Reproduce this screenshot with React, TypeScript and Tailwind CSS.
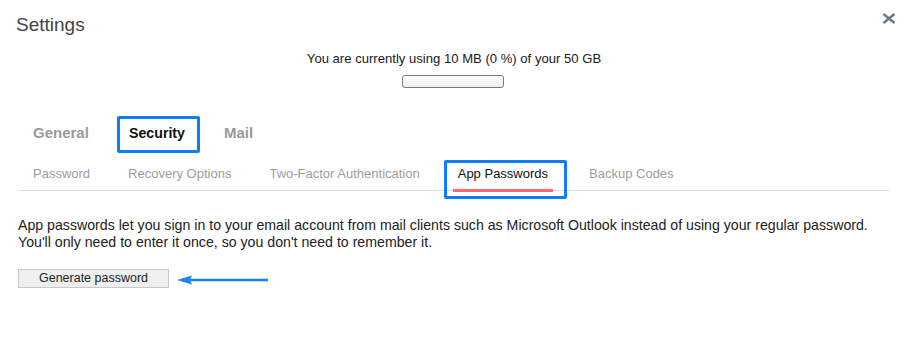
import React from "react";

export default function App() {
  const subtabs = ["Password", "Recovery Options", "Two-Factor Authentication", "App Passwords", "Backup Codes"];
  return (
    <div className="w-[908px] h-[358px] bg-white font-['Liberation_Sans',Arial,sans-serif] overflow-hidden">
      <div className="flex justify-between items-start pt-[14px] pl-[16px] pr-[12px]">
        <div className="text-[19px] leading-[22px] text-[#444]">Settings</div>
        <svg width="14" height="11" viewBox="0 0 14 11" className="mt-[-1px]">
          <path d="M1.5 1 L12.5 10 M12.5 1 L1.5 10" stroke="#6b7b8c" strokeWidth="2.6" strokeLinecap="butt" />
        </svg>
      </div>

      <div className="mt-[15px] flex flex-col items-center">
        <div className="text-[13.1px] leading-[15px] text-[#1a1a1a]">You are currently using 10 MB (0 %) of your 50 GB</div>
        <div className="mt-[9px] w-[102px] h-[13px] border border-[#7a7a7a] rounded-[3px] bg-gradient-to-b from-white to-[#eeeeee] -ml-[3px]"></div>
      </div>

      <div className="mt-[36px] flex pl-[33px] text-[15px] leading-[17px] font-bold">
        <div className="w-[96px] text-[#9a9a9a]">General</div>
        <div className="w-[95px] relative text-[#111]">
          <span className="text-[14.2px]">Security</span>
          <div className="absolute left-[-12px] top-[-8px] w-[83px] h-[37px] border-[3px] border-[#0f7df6] rounded-[2px]"></div>
        </div>
        <div className="text-[#9a9a9a]">Mail</div>
      </div>

      <div className="mt-[24px] mx-[18px] w-[871px] border-b border-[#dddddd] flex pl-[10px] gap-[28px] text-[13px] leading-[15px]">
        {subtabs.map((t) => {
          const active = t === "App Passwords";
          return (
            <div
              key={t}
              className={
                active
                  ? "relative px-[5px] pb-[8px] border-b-[3px] border-[#ff6670] -mb-[2px] text-[#111]"
                  : t === "Backup Codes"
                  ? "ml-[3px] px-[5px] pb-[8px] border-b-[3px] border-transparent -mb-[2px] text-[#9d9d9d]"
                  : "px-[5px] pb-[8px] border-b-[3px] border-transparent -mb-[2px] text-[#9d9d9d]"
              }
            >
              {t}
              {active && (
                <div className="absolute left-[-9px] top-[-6px] w-[123px] h-[39px] border-[3px] border-[#0f7df6] rounded-[2px]"></div>
              )}
            </div>
          );
        })}
      </div>

      <div className="mt-[26px] pl-[18px] text-[14.17px] leading-[17px] text-[#222]">
        <div>App passwords let you sign in to your email account from mail clients such as Microsoft Outlook instead of using your regular password.</div>
        <div>You'll only need to enter it once, so you don't need to remember it.</div>
      </div>

      <div className="mt-[18px] pl-[18px] flex items-center">
        <button className="w-[151px] h-[19px] bg-[#efefef] border border-[#c8c8c8] text-[12.5px] leading-[17px] text-[#222] font-['Liberation_Sans',Arial,sans-serif]">
          Generate password
        </button>
        <svg width="92" height="10" viewBox="0 0 92 10" className="ml-[8px] mt-[3px]">
          <path d="M12 5 L91 5" stroke="#1683f0" strokeWidth="2.5" />
          <path d="M0 5 L15 0.5 L13 5 L15 9.5 Z" fill="#1683f0" />
        </svg>
      </div>
    </div>
  );
}
